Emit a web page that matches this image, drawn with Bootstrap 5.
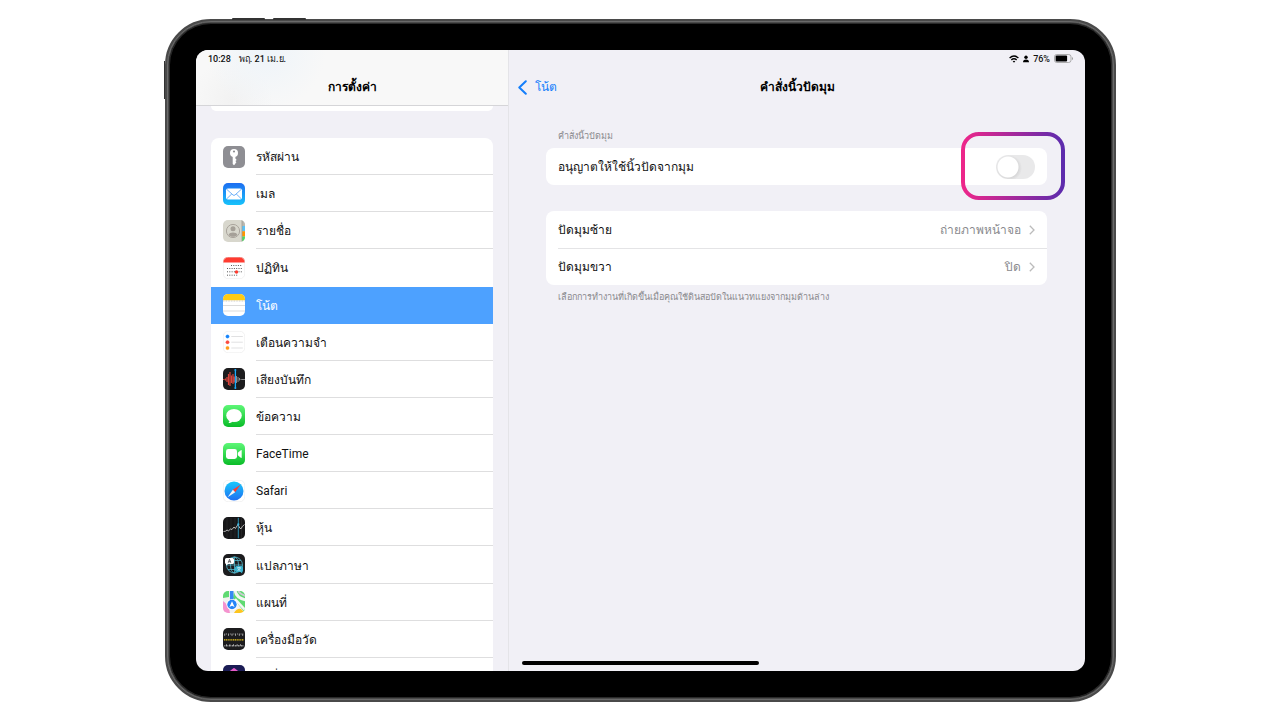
<!DOCTYPE html>
<html lang="th">
<head>
<meta charset="utf-8">
<meta name="viewport" content="width=device-width, initial-scale=1">
<title>การตั้งค่า</title>
<link href="https://cdn.jsdelivr.net/npm/bootstrap@5.3.0/dist/css/bootstrap.min.css" rel="stylesheet">
<style>
  body { background: #fff; color: #111; font-family: Roboto, "Noto Sans", sans-serif; font-size: 12px; line-height: 20px; }
  .stage { height: 100vh; padding: 19px 164px 18px 165px; }
  .tablet { background: #000; border: 4px solid #4a4a4a; border-radius: 46px; padding: 27px; box-shadow: inset 0 0 0 1px #2a2a2a; }
  .tablet::before { content: ""; position: absolute; inset: -2px; border: 1px solid #6a6a6a; border-radius: 44px; pointer-events: none; }
  .hw-key { background: #333; height: 2px; width: 33px; top: -5px; border-radius: 1px 1px 0 0; }
  .hw-key-a { left: 63px; }
  .hw-key-b { left: 104px; }
  .hw-side { background: #333; width: 1px; height: 38px; left: -5px; top: 38px; }
  .screen { background: #f1f0f6; border-radius: 12px; }
  .sidebar { width: 313px; border-right: 1px solid #e4e4e8; }
  .side-head { height: 56px; background: radial-gradient(circle at 70px 0, #eef4f9, transparent 60px), radial-gradient(circle at 36px 50px, #f2f2f2, transparent 40px), #f8f8f8; border-bottom: 1px solid #d5d5d8; }
  .clock { font-size: 9px; line-height: 18px; height: 17px; font-weight: 500; }
  .side-title, .pane-title { font-size: 12px; line-height: 20px; font-weight: 600; color: #000; }
  .side-title { padding-top: 10px; }
  .side-list { padding: 0 15px; }
  .prev-group { height: 5px; border-radius: 0 0 8px 8px; }
  .apps { display: grid; grid-auto-rows: 1fr; height: 557px; margin-top: 27px; border-radius: 8px 8px 0 0; background: #fff; }
  .app-row { color: #111; padding-left: 12px; gap: 11px; }
  .app-row svg { width: 22px; height: 22px; flex: none; }
  .app-name { border-bottom: 1px solid #dededf; padding-top: 2px; }
  .app-row.active { background: #4da1ff; color: #fff; }
  .app-row.active .app-name { border-color: transparent; }
  .app-row.before-active .app-name { border-color: transparent; }
  .pane-head { height: 40px; }
  .back { color: #147efb; left: 9px; }
  .sheet { padding: 21px 38px 0 37px; }
  .note { color: #8a8a8e; font-size: 9px; line-height: 16px; padding-left: 12px; }
  .group { background: #fff; border-radius: 8px; padding-left: 12px; }
  .group-next { margin-top: 26px; }
  .opt { height: 37px; padding-left: 0; padding-right: 12px; color: #111; }
  .opt + .opt { border-top: 1px solid #e4e4e6; }
  .opt-value { color: #8a8a8e; gap: 8px; }
  .form-switch .form-check-input.corner-switch { width: 39px; height: 24px; margin: 0; border: 0; box-shadow: none;
    background: radial-gradient(circle at 12px 12px, #fff 10px, transparent 11px), radial-gradient(circle at 13px 13px, #d4d4d5 9px, transparent 13px) #e9e9ea; }
  .form-switch .form-check-input.corner-switch:checked { background: radial-gradient(circle at 27px 12px, #fff 10px, transparent 11px) #34c759; }
  .ring { width: 104px; height: 68px; right: -18px; top: -16px; pointer-events: none; }
  .home-bar { left: 13px; bottom: 6px; width: 237px; height: 4px; background: #000; }
</style>
</head>
<body>
<div class="stage">
<div class="tablet position-relative h-100">
  <span class="hw-key hw-key-a position-absolute"></span>
  <span class="hw-key hw-key-b position-absolute"></span>
  <span class="hw-side position-absolute"></span>
  <div class="screen d-flex h-100 overflow-hidden">

    <aside class="sidebar flex-shrink-0 overflow-hidden">
      <header class="side-head">
        <div class="clock d-flex gap-2 ps-2 ms-1"><span>10:28</span><span>พฤ. 21 เม.ย.</span></div>
        <h1 class="side-title text-center m-0">การตั้งค่า</h1>
      </header>
      <div class="side-list">
      <div class="bg-white prev-group"></div>
      <nav class="apps overflow-hidden">
        <a href="#" class="app-row d-flex align-items-center text-decoration-none">
          <svg viewBox="0 0 22 22"><rect width="22" height="22" rx="5" fill="#8e8e93"/><circle cx="11" cy="7" r="4" fill="#fff"/><circle cx="11" cy="5.500" r="1.100" fill="#8e8e93"/><path d="M9.700 10h2.700v2.600l1.300 1.300-1.300 1.200 1 1.100-1 1v.5L11 19.300l-1.300-1.400z" fill="#fff"/></svg>
          <span class="app-name flex-fill h-100 d-flex align-items-center">รหัสผ่าน</span></a>
        <a href="#" class="app-row d-flex align-items-center text-decoration-none">
          <svg viewBox="0 0 22 22"><defs><linearGradient id="mailg" x2="0" y2="1"><stop stop-color="#1d6df1"/><stop offset="1" stop-color="#17c3fb"/></linearGradient></defs><rect width="22" height="22" rx="5" fill="url(#mailg)"/><rect x="3" y="5.500" width="16" height="11" rx="1.800" fill="#fff"/><path d="M3.600 6.200 10 12q1 .8 2 0l6.400-5.800M3.600 15.900l5.200-5M18.400 15.900l-5.200-5" fill="none" stroke="#4a9df6" stroke-width=".8"/></svg>
          <span class="app-name flex-fill h-100 d-flex align-items-center">เมล</span></a>
        <a href="#" class="app-row d-flex align-items-center text-decoration-none">
          <svg viewBox="0 0 22 22"><defs><clipPath id="rnd"><rect width="22" height="22" rx="5"/></clipPath></defs><g clip-path="url(#rnd)"><rect width="22" height="22" fill="#d8d7cd"/><path d="M19 0h3v6h-3z" fill="#b9b8b0"/><path d="M19 6h3v5.300h-3z" fill="#5ac2f7"/><path d="M19 11.300h3v5.200h-3z" fill="#ff9500"/><path d="M19 16.500h3V22h-3z" fill="#4cd964"/><path d="M18.600 0h.8v22h-.8z" fill="#9d9c94"/><circle cx="10" cy="11" r="6.600" fill="none" stroke="#aaa59d"/><circle cx="10" cy="8.800" r="2.500" fill="#a5a098"/><path d="M5.600 14.800c1-3 7.800-3 8.800 0-2 2.700-6.800 2.700-8.800 0" fill="#a5a098"/></g></svg>
          <span class="app-name flex-fill h-100 d-flex align-items-center">รายชื่อ</span></a>
        <a href="#" class="app-row before-active d-flex align-items-center text-decoration-none">
          <svg viewBox="0 0 22 22"><g clip-path="url(#rnd)"><rect width="22" height="22" fill="#fff"/><path d="M0 0h22v5.500H0z" fill="#ff3b30"/></g><rect x=".25" y=".25" width="21.500" height="21.500" rx="5" fill="none" stroke="#e4e4e4" stroke-width=".5"/><path d="M8 8.500h11M4 11.500h15M4 14.800h15M4 18.200h10.500" stroke="#444" stroke-width=".9" stroke-dasharray="1 1.300"/><circle cx="13.500" cy="15" r="1.700" fill="#ff3b30"/></svg>
          <span class="app-name flex-fill h-100 d-flex align-items-center">ปฏิทิน</span></a>
        <a href="#" class="app-row active d-flex align-items-center text-decoration-none" aria-current="page">
          <svg viewBox="0 0 22 22"><g clip-path="url(#rnd)"><rect width="22" height="22" fill="#fff"/><path d="M0 0h22v6.300H0z" fill="#fecb14"/><path d="M0 7h22" stroke="#aaa" stroke-width=".7" stroke-dasharray=".8 .8"/><path d="M0 11.500h22M0 17h22" stroke="#ccc" stroke-width=".7"/></g></svg>
          <span class="app-name flex-fill h-100 d-flex align-items-center">โน้ต</span></a>
        <a href="#" class="app-row d-flex align-items-center text-decoration-none">
          <svg viewBox="0 0 22 22"><rect x=".25" y=".25" width="21.500" height="21.500" rx="5" fill="#fff" stroke="#e4e4e4" stroke-width=".5"/><g stroke-width=".8" stroke-opacity=".35"><circle cx="4.500" cy="5.500" r="1.700" fill="#1684fb" stroke="#1684fb"/><circle cx="4.500" cy="11.200" r="1.700" fill="#fb4b40" stroke="#fb4b40"/><circle cx="4.500" cy="17" r="1.700" fill="#ff9c18" stroke="#ff9c18"/></g><path d="M8.300 5.500h11.500M8.300 11.200h11.500M8.300 17h11.500" stroke="#d4d4d6" stroke-width=".7"/></svg>
          <span class="app-name flex-fill h-100 d-flex align-items-center">เตือนความจำ</span></a>
        <a href="#" class="app-row d-flex align-items-center text-decoration-none">
          <svg viewBox="0 0 22 22"><rect width="22" height="22" rx="5" fill="#1c1c1e"/><path d="M0 11.500h1.500M2.500 10.500v2M4 9v5M5.500 6v11M7 4v14M8.500 7.500v7.500M10 6v10M11.300 8.500v6" stroke="#d8443c" stroke-width="1.200"/><path d="M13.500 8v7M15 9v5M16.500 10v2.500M18 11v1M18.500 11.500H22" stroke="#aaa" stroke-width=".8"/><path d="M12.400 1.500v19" stroke="#18a8f8" stroke-width="1.300"/><circle cx="12.400" cy="2" r="1" fill="#18a8f8"/><circle cx="12.400" cy="20" r="1" fill="#18a8f8"/></svg>
          <span class="app-name flex-fill h-100 d-flex align-items-center">เสียงบันทึก</span></a>
        <a href="#" class="app-row d-flex align-items-center text-decoration-none">
          <svg viewBox="0 0 22 22"><defs><linearGradient id="green" x2="0" y2="1"><stop stop-color="#5df777"/><stop offset="1" stop-color="#0abc28"/></linearGradient></defs><rect width="22" height="22" rx="5" fill="url(#green)"/><ellipse cx="11" cy="10.500" rx="7.800" ry="6.600" fill="#fff"/><path d="M6.500 14.800c.2 1.500-.3 2.500-1.200 3.300 1.700 0 3.200-.5 4.300-1.600z" fill="#fff"/></svg>
          <span class="app-name flex-fill h-100 d-flex align-items-center">ข้อความ</span></a>
        <a href="#" class="app-row d-flex align-items-center text-decoration-none">
          <svg viewBox="0 0 22 22"><rect width="22" height="22" rx="5" fill="url(#green)"/><rect x="3" y="6" width="11" height="10" rx="2.400" fill="#fff"/><path d="m14.800 9.700 3-2.500q.9-.5.9.5v6.600q0 1-.9.500l-3-2.500z" fill="#fff"/></svg>
          <span class="app-name flex-fill h-100 d-flex align-items-center">FaceTime</span></a>
        <a href="#" class="app-row d-flex align-items-center text-decoration-none">
          <svg viewBox="0 0 22 22"><defs><linearGradient id="saf" x2="0" y2="1"><stop stop-color="#1ac8fb"/><stop offset="1" stop-color="#1d6ff2"/></linearGradient></defs><rect x=".25" y=".25" width="21.500" height="21.500" rx="5" fill="#fff" stroke="#e4e4e4" stroke-width=".5"/><circle cx="11" cy="11" r="9.500" fill="url(#saf)"/><path d="m17.400 4.700-7.500 5.100 2.300 2.400z" fill="#ff3b30"/><path d="m4.600 17.300 5.300-7.500 2.300 2.400z" fill="#f4f4f4"/></svg>
          <span class="app-name flex-fill h-100 d-flex align-items-center">Safari</span></a>
        <a href="#" class="app-row d-flex align-items-center text-decoration-none">
          <svg viewBox="0 0 22 22"><rect width="22" height="22" rx="5" fill="#161618"/><path d="M4 1v20M8 1v20M12 1v20M18.500 1v20" stroke="#333" stroke-width=".5"/><path d="m.5 14.500 2-.3L4 13l1.500.8L7.500 12l1.500.5L11 10l1.400 1.500L14 9l1-1.500 1.700 3.500 1.300.8 1.300-2.300 2.200-2" fill="none" stroke="#ddd" stroke-width=".8"/><path d="M15.300.8v20.400" stroke="#2d9dc4" stroke-width=".9"/><circle cx="15.300" cy="7.300" r="1.100" fill="#3bb6e3"/></svg>
          <span class="app-name flex-fill h-100 d-flex align-items-center">หุ้น</span></a>
        <a href="#" class="app-row d-flex align-items-center text-decoration-none">
          <svg viewBox="0 0 22 22"><rect width="22" height="22" rx="5" fill="#1c1c1e"/><g fill="none" stroke="#54b8cc" stroke-width=".8"><circle cx="11.500" cy="11" r="8"/><ellipse cx="11.500" cy="11" rx="4" ry="8"/><path d="M3.500 11h16M11.500 3v16M5 6.500h13M5 15.500h13"/></g><path d="M3.500 4h6q1.500 0 1.500 1.500v3q0 1.500-1.500 1.500H5.300L3 11.500V10q-1-.4-1-1.500v-3Q2 4 3.500 4" fill="#fff"/><path d="m5.200 8.800 1.300-3.500 1.300 3.500M5.600 7.700h1.800" fill="none" stroke="#333" stroke-width=".7"/><path d="M13.500 12h5q1.500 0 1.500 1.500v3q0 1-.8 1.500v1.500L17.500 18h-4q-1.500 0-1.500-1.500v-3q0-1.500 1.500-1.500" fill="#3ab3cf"/><path d="M14 13.800h4M16 13v1M14.500 17l3-3M17.500 17l-2.800-2.500" stroke="#fff" stroke-width=".6"/></svg>
          <span class="app-name flex-fill h-100 d-flex align-items-center">แปลภาษา</span></a>
        <a href="#" class="app-row d-flex align-items-center text-decoration-none">
          <svg viewBox="0 0 22 22"><g clip-path="url(#rnd)"><rect width="22" height="22" fill="#f2f2f0"/><path d="M0 0h6v6L0 7z" fill="#5fda72"/><path d="M11 0h11v22L10 7z" fill="#5fda72"/><path d="M12-1q1 8 11 10" fill="none" stroke="#f5f5f5" stroke-width="3"/><path d="M15-1q1 4 8 6" fill="none" stroke="#c9ccd0" stroke-width="1.800"/><path d="m12 8 11 12" stroke="#f5f5f5" stroke-width="2.500"/><path d="M0 10q6 4 7 12H0z" fill="#f593cf"/><path d="M11 22q3-5 7-4l4 4z" fill="#fdc51d"/><path d="M8.700 0v10" stroke="#3688f5" stroke-width="3.500"/><circle cx="9" cy="13.500" r="5.500" fill="#fff"/><circle cx="9" cy="13.500" r="4.700" fill="#2585f7"/><path d="m9 10.200 2.600 5.800L9 14.700 6.400 16z" fill="#fff"/></g></svg>
          <span class="app-name flex-fill h-100 d-flex align-items-center">แผนที่</span></a>
        <a href="#" class="app-row d-flex align-items-center text-decoration-none">
          <svg viewBox="0 0 22 22"><rect width="22" height="22" rx="5" fill="#1c1c1e"/><path d="M1.500 6h19" stroke="#ccc" stroke-width="1.200" stroke-dasharray=".7 1.100"/><path d="M1.500 7h19" stroke="#ccc" stroke-width="2" stroke-dasharray=".6 3"/><path d="M1 11.800h20" stroke="#f5ce18" stroke-width="1.300" stroke-dasharray="1.200 .6"/><path d="M1.500 17.800h19" stroke="#bbb" stroke-width="1.400" stroke-dasharray=".8 .7"/><path d="M3 17h17" stroke="#ccc" stroke-width="2" stroke-dasharray=".6 3"/></svg>
          <span class="app-name flex-fill h-100 d-flex align-items-center">เครื่องมือวัด</span></a>
        <a href="#" class="app-row d-flex align-items-center text-decoration-none">
          <svg viewBox="0 0 22 22"><rect width="22" height="22" rx="5" fill="#1b1c55"/><path d="m11 4 5 4v5l-5 4-5-4V8z" fill="#e65bc8" stroke="#e65bc8" stroke-width="2" stroke-linejoin="round"/><path d="m6 13 5 3 5-3v3l-5 4-5-4z" fill="#3bc7e8"/></svg>
          <span class="app-name flex-fill h-100 d-flex align-items-center">คำสั่งลัด</span></a>
      </nav>
      </div>
    </aside>

    <main class="flex-fill position-relative">
      <div class="clock d-flex justify-content-end align-items-center pe-2 me-1">
        <svg class="me-1" width="10" height="8" viewBox="0 0 10 8" fill="none" stroke="#000" stroke-width="1.400"><path d="M.6 3Q5-1 9.400 3M2.300 4.900q2.700-2.300 5.400 0"/><path d="M3.700 6.300q1.300-.9 2.600 0L5 7.700z" fill="#000" stroke="none"/></svg>
        <svg class="me-1" width="6" height="8" viewBox="0 0 6 8"><circle cx="3" cy="2.200" r="1.700"/><path d="M0 7.200q0-2.700 3-2.700t3 2.700z"/></svg>
        <span>76%</span>
        <svg class="ms-1" width="19" height="9" viewBox="0 0 19 9"><rect x=".5" y=".5" width="16.500" height="8" rx="2.300" fill="none" stroke="#999" stroke-width=".8"/><rect x="1.600" y="1.600" width="11.500" height="5.800" rx="1"/><path d="M18 3v3q1-.5 1-1.500T18 3" fill="#999"/></svg>
      </div>
      <div class="pane-head position-relative d-flex align-items-center justify-content-center">
        <a href="#" class="back position-absolute d-flex align-items-center text-decoration-none">
          <svg class="me-2" width="9" height="15" viewBox="0 0 9 15" fill="none" stroke="#147efb" stroke-width="2" stroke-linecap="round" stroke-linejoin="round"><path d="M7.800 1.200 1.300 7.500l6.500 6.300"/></svg>โน้ต</a>
        <h2 class="pane-title m-0">คำสั่งนิ้วปัดมุม</h2>
      </div>
      <div class="sheet">
        <div class="note">คำสั่งนิ้วปัดมุม</div>
        <div class="group position-relative mt-1">
          <div class="opt form-switch d-flex align-items-center justify-content-between">
            <label for="corner">อนุญาตให้ใช้นิ้วปัดจากมุม</label>
            <input class="form-check-input corner-switch" type="checkbox" role="switch" id="corner">
          </div>
          <svg class="ring position-absolute" viewBox="0 0 104 68"><defs><linearGradient id="rg"><stop stop-color="#ed268a"/><stop offset="1" stop-color="#5d2bad"/></linearGradient></defs><rect x="2" y="2" width="100" height="64" rx="16" fill="none" stroke="url(#rg)" stroke-width="4"/></svg>
        </div>
        <div class="group group-next">
          <a href="#" class="opt d-flex align-items-center justify-content-between text-decoration-none"><span>ปัดมุมซ้าย</span>
            <span class="opt-value d-flex align-items-center">ถ่ายภาพหน้าจอ<svg width="6" height="10" viewBox="0 0 6 10" fill="none" stroke="#bbb" stroke-width="1.300"><path d="m.8.8 4.200 4.200L.8 9.200"/></svg></span></a>
          <a href="#" class="opt d-flex align-items-center justify-content-between text-decoration-none"><span>ปัดมุมขวา</span>
            <span class="opt-value d-flex align-items-center">ปิด<svg width="6" height="10" viewBox="0 0 6 10" fill="none" stroke="#bbb" stroke-width="1.300"><path d="m.8.8 4.200 4.200L.8 9.200"/></svg></span></a>
        </div>
        <div class="note mt-1">เลือกการทำงานที่เกิดขึ้นเมื่อคุณใช้ดินสอปัดในแนวทแยงจากมุมด้านล่าง</div>
      </div>
      <div class="home-bar position-absolute rounded-pill"></div>
    </main>
  </div>
</div>
</div>
<script src="https://cdn.jsdelivr.net/npm/bootstrap@5.3.0/dist/js/bootstrap.bundle.min.js"></script>
</body>
</html>
